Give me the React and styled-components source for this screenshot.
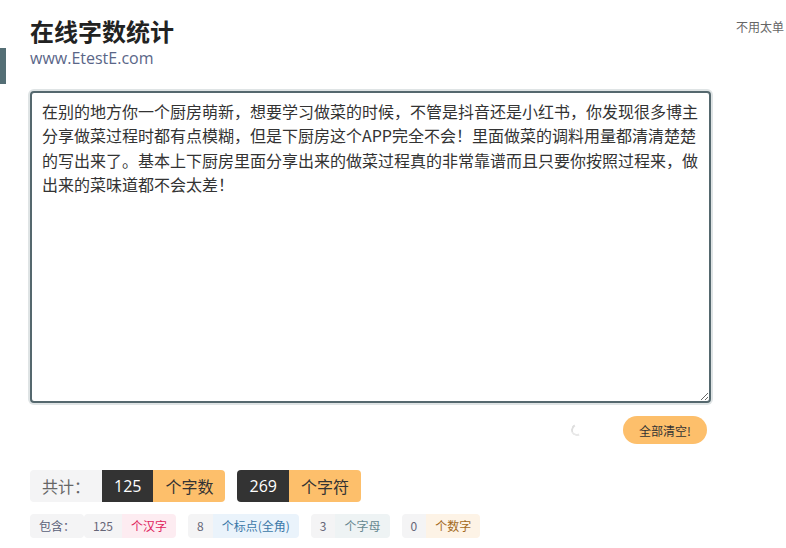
import React, { useEffect, useRef } from "react";
import styled, { createGlobalStyle } from "styled-components";

const Global = createGlobalStyle`
  html, body { margin: 0; padding: 0; background: #fff; }
  body { font-family: "Noto Sans CJK SC", "Liberation Sans", sans-serif; color: #333; }
  * { box-sizing: border-box; text-spacing-trim: space-all; }
`;

const Page = styled.div`
  position: relative;
  width: 786px;
  height: 548px;
  padding: 0 30px 0 30px;
  overflow: hidden;
`;

const SideMark = styled.div`
  position: absolute;
  left: 0;
  top: 48px;
  width: 6px;
  height: 36px;
  background: #546e75;
`;

const TopLink = styled.a`
  position: absolute;
  right: 2px;
  top: 18px;
  font-size: 12px;
  color: #666;
  text-decoration: none;
`;

const Header = styled.header`
  display: flex;
  flex-direction: column;
  padding-top: 13px;
  height: 91px;
`;

const Title = styled.h1`
  margin: 0;
  font-size: 24px;
  line-height: 36px;
  font-weight: 700;
  color: #222;
`;

const Site = styled.div`
  font-family: "Open Sans", "Liberation Sans", sans-serif;
  font-size: 16px;
  line-height: 18px;
  color: #5a6688;
`;

const Editor = styled.textarea`
  display: block;
  width: 681px;
  height: 312px;
  margin: 0;
  padding: 6px 10px;
  border: 2px solid #55686e;
  border-radius: 4px;
  box-shadow: 0 0 0 2px #dfe4e5;
  font-family: "Noto Sans CJK SC", sans-serif;
  font-size: 16px;
  line-height: 24.4px;
  color: #333;
  caret-color: #333;
  resize: vertical;
  outline: none;
`;

const Actions = styled.div`
  display: flex;
  justify-content: flex-end;
  align-items: center;
  gap: 40px;
  width: 677px;
  margin-top: 12px;
  height: 30px;
`;

const Spinner = styled.div`
  width: 12px;
  height: 12px;
  border-radius: 50%;
  border: 2px solid transparent;
  border-left-color: #dedede;
  border-bottom-color: #e8e8e8;
  transform: rotate(20deg);
`;

const ClearButton = styled.button`
  height: 28px;
  padding: 0 16px;
  border: none;
  border-radius: 14px;
  background: #fdbf6b;
  color: #333;
  font-family: "Noto Sans CJK SC", sans-serif;
  font-size: 12px;
  cursor: pointer;
`;

const StatsRow = styled.div`
  display: flex;
  gap: 12px;
  margin-top: 25px;
`;

const Group = styled.div`
  display: flex;
  height: 32px;
  border-radius: 4px;
  overflow: hidden;
  font-size: 16px;
  line-height: 32px;
`;

const Cell = styled.span`
  display: block;
  padding: 0 ${(p) => p.$pad || 12}px;
  background: ${(p) => p.$bg};
  color: ${(p) => p.$fg};
`;

const Num = styled(Cell)`
  font-family: "Open Sans", "Liberation Sans", sans-serif;
`;

const DetailRow = styled.div`
  display: flex;
  gap: 12px;
  margin-top: 12px;
`;

const SmallGroup = styled.div`
  display: flex;
  height: 24px;
  border-radius: 4px;
  overflow: hidden;
  font-size: 12px;
  line-height: 24px;
`;

const Lead = styled(SmallGroup)`
  margin-right: -12px;
`;

const SmallCell = styled.span`
  display: block;
  padding: 0 9px;
  background: ${(p) => p.$bg};
  color: ${(p) => p.$fg};
`;

const text =
  "在别的地方你一个厨房萌新，想要学习做菜的时候，不管是抖音还是小红书，你发现很多博主分享做菜过程时都有点模糊，但是下厨房这个APP完全不会！里面做菜的调料用量都清清楚楚的写出来了。基本上下厨房里面分享出来的做菜过程真的非常靠谱而且只要你按照过程来，做出来的菜味道都不会太差！";

const details = [
  { n: 125, label: "个汉字", bg: "#fdecf1", fg: "#e0245e" },
  { n: 8, label: "个标点(全角)", bg: "#eaf3fb", fg: "#3a78a8" },
  { n: 3, label: "个字母", bg: "#eef3f4", fg: "#668890" },
  { n: 0, label: "个数字", bg: "#fdf3e6", fg: "#a36a1c" },
];

export default function App() {
  const ref = useRef(null);
  useEffect(() => {
    const el = ref.current;
    if (el) {
      el.focus();
      el.setSelectionRange(text.length, text.length);
    }
  }, []);
  return (
    <Page>
      <Global />
      <SideMark />
      <TopLink href="#">不用太单</TopLink>
      <Header>
        <Title>在线字数统计</Title>
        <Site>www.EtestE.com</Site>
      </Header>
      <Editor ref={ref} defaultValue={text} />
      <Actions>
        <Spinner />
        <ClearButton>全部清空!</ClearButton>
      </Actions>
      <StatsRow>
        <Group>
          <Cell $bg="#f4f4f5" $fg="#666" $pad={12}>共计：</Cell>
          <Num $bg="#333" $fg="#fff" $pad={12}>125</Num>
          <Cell $bg="#fdbf6b" $fg="#333" $pad={12}>个字数</Cell>
        </Group>
        <Group>
          <Num $bg="#333" $fg="#fff" $pad={12}>269</Num>
          <Cell $bg="#fdbf6b" $fg="#333" $pad={12}>个字符</Cell>
        </Group>
      </StatsRow>
      <DetailRow>
        <Lead>
          <SmallCell $bg="#f4f4f5" $fg="#5a6078">包含：</SmallCell>
        </Lead>
        {details.map((d) => (
          <SmallGroup key={d.label}>
            <SmallCell $bg="#f4f4f5" $fg="#667">{d.n}</SmallCell>
            <SmallCell $bg={d.bg} $fg={d.fg}>{d.label}</SmallCell>
          </SmallGroup>
        ))}
      </DetailRow>
    </Page>
  );
}
